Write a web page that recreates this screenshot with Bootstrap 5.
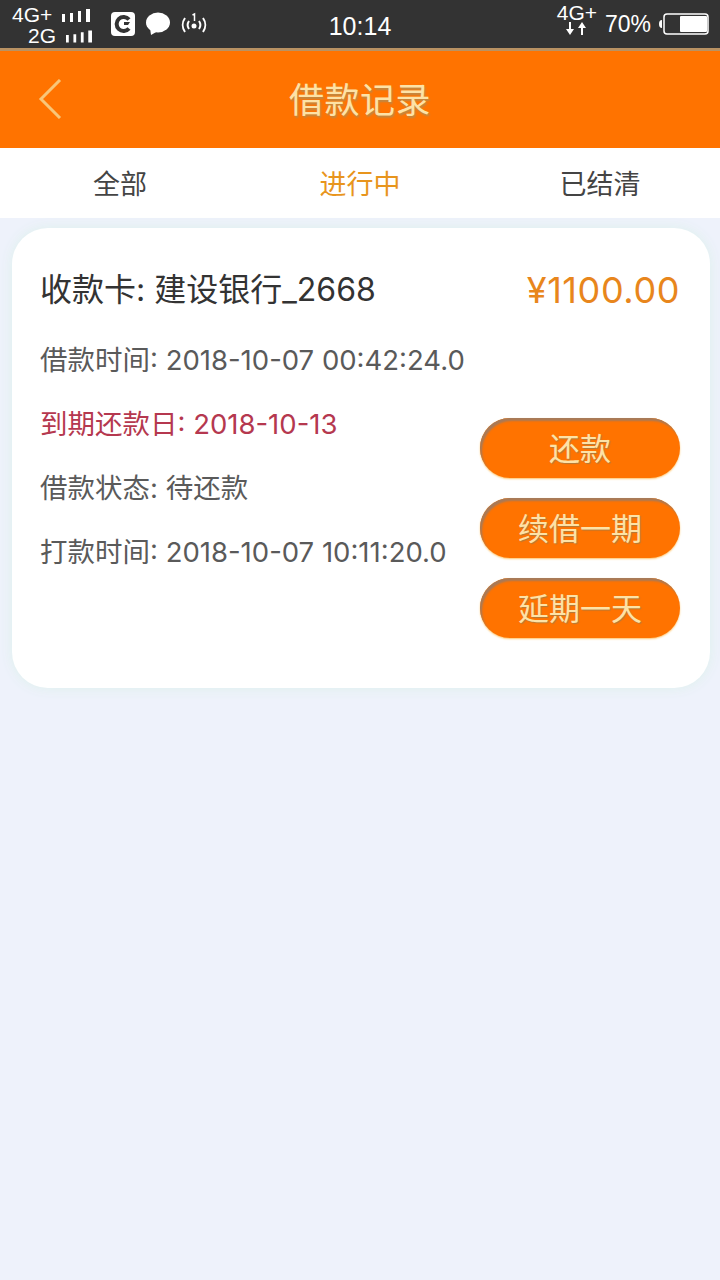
<!DOCTYPE html>
<html lang="zh">
<head>
<meta charset="utf-8">
<title>借款记录</title>
<link rel="stylesheet" href="https://cdn.jsdelivr.net/npm/bootstrap@5.3.0/dist/css/bootstrap.min.css">
<style>
html,body{height:100%}
body{background:#eef2fb;font-family:Inter,"Noto Sans CJK SC",sans-serif;font-weight:400;width:720px;min-height:1280px}
.sbar{height:48px;background:#333;color:#fff;font-family:"Liberation Sans",sans-serif;padding:0 11px 0 12px}
.net{width:80px;font-size:21px;line-height:20px;padding-top:3px}
.net div{height:21px}
.net .two{padding-left:16px}
.net svg{margin-left:2px}
.clock{font-size:25px;left:0;right:0;top:9px;line-height:34px}
.net4{width:44px;font-size:21px;line-height:20px;top:-5px}
.pct{font-size:23px;line-height:48px;margin-left:6px}
.topbar{height:100px;background:#ff7300;border-top:3px solid #b99263;color:#fde2a6;text-shadow:1px 2px 2px #b98a4a}
.topbar h1{font-size:35px;font-weight:400;margin:0;line-height:98px;letter-spacing:.5px}
.backb{left:38px;top:28px}
.tabstrip{height:70px;background:#fff;font-size:27px;line-height:74px;color:#444}
.tabstrip>div{width:240px}
.tabon{color:#e8951d}
.loan{margin:10px 10px 0 12px;height:460px;background:#fff;border-radius:36px;box-shadow:0 0 12px rgba(220,240,235,.95);padding:34px 30px 0 28px}
.ttl{font-size:32px;line-height:56px;color:#333;margin-bottom:10px}
.amt{font-size:36px;line-height:56px;color:#e8861c;font-weight:400;letter-spacing:.6px}
.ln{font-size:27.500px;line-height:64px;color:#5a5a5a;white-space:nowrap}
.due{color:#b5384f}
.acts{width:200px;padding-top:90px;gap:20px;margin-left:-40px}
.pillb{height:60px;width:200px;border-radius:30px;background:#ff7300;border:0;box-shadow:inset 2px 3px 2px #a87a58,0 1px 2px #ffc46a;color:#fde2a6;font-size:31px;font-weight:400;line-height:62px;padding:0;text-shadow:1px 1px 1px #b07a3a}
</style>
</head>
<body>
<div class="sbar d-flex align-items-center position-relative">
  <div class="net flex-shrink-0">
    <div class="d-flex align-items-center gap-2"><span>4G+</span><svg width="28" height="16" viewBox="0 0 28 16"><path fill="#fff" d="M0 7h3v8H0zM8 6h3v9H8zM16 4h3v11h-3zM24 2h4v13h-4z"/></svg></div>
    <div class="two d-flex align-items-center gap-2"><span>2G</span><svg width="28" height="16" viewBox="0 0 28 16"><path fill="#fff" d="M0 7h3v8H0zM8 6h3v9H8zM16 4h3v11h-3zM24 2h4v13h-4z"/></svg></div>
  </div>
  <svg class="flex-shrink-0" style="margin-left:19px" width="24" height="24" viewBox="0 0 24 24"><rect width="24" height="24" rx="4" fill="#fff"/><path fill="none" stroke="#333" stroke-width="4" d="M18 7.500A7 7 0 1 0 18 16.500"/><path fill="#333" d="M13 10h6l-2 3h-4z"/></svg>
  <svg class="flex-shrink-0" style="margin-left:10px" width="26" height="24" viewBox="0 0 26 24"><ellipse cx="13" cy="10.500" rx="12" ry="10" fill="#fff"/><path fill="#fff" d="M5 16l1 7 7-4z"/></svg>
  <svg class="flex-shrink-0" style="margin-left:9px" width="28" height="24" viewBox="0 0 28 24" fill="none" stroke="#fff" stroke-width="2"><path d="M5 6a12 12 0 0 0 0 14M23 6a12 12 0 0 1 0 14M9 9a7 7 0 0 0 0 8M19 9a7 7 0 0 1 0 8"/><circle cx="14" cy="14" r="2.500" fill="#fff" stroke="none"/><path d="M12.500 3l2-1v7" stroke-width="1.500"/></svg>
  <div class="clock position-absolute text-center">10:14</div>
  <div class="ms-auto d-flex align-items-center">
    <div class="net4 position-relative text-center">4G+<svg class="d-block" style="margin:-1px 0 0 11px" width="20" height="13" viewBox="0 0 20 13"><path fill="#fff" d="M3 0h2v7h3l-4 6-4-6h3zM15 13h2V6h3l-4-6-4 6h3z"/></svg></div>
    <div class="pct">70%</div>
    <svg class="ms-2" width="50" height="22" viewBox="0 0 50 22"><path fill="#fff" d="M0 11a3 4 0 0 1 3-4v8a3 4 0 0 1-3-4z"/><rect x="5" y="1" width="44" height="20" rx="3" fill="none" stroke="#fff" stroke-width="1.500"/><rect x="21" y="3" width="27" height="16" rx="1" fill="#fff"/></svg>
  </div>
</div>
<div class="topbar position-relative text-center">
  <svg class="backb position-absolute" width="24" height="40" viewBox="0 0 24 40" fill="none" stroke="#f8c678" stroke-width="3"><path d="M22 1L3 20l19 19"/></svg>
  <h1>借款记录</h1>
</div>
<div class="tabstrip d-flex text-center">
  <div>全部</div>
  <div class="tabon">进行中</div>
  <div>已结清</div>
</div>
<div class="loan">
  <div class="d-flex justify-content-between">
    <div class="ttl">收款卡: 建设银行_2668</div>
    <div class="amt">¥1100.00</div>
  </div>
  <div class="d-flex justify-content-between">
    <div>
      <div class="ln">借款时间: 2018-10-07 00:42:24.0</div>
      <div class="ln due">到期还款日: 2018-10-13</div>
      <div class="ln">借款状态: 待还款</div>
      <div class="ln">打款时间: 2018-10-07 10:11:20.0</div>
    </div>
    <div class="acts d-flex flex-column flex-shrink-0">
      <button type="button" class="btn pillb">还款</button>
      <button type="button" class="btn pillb">续借一期</button>
      <button type="button" class="btn pillb">延期一天</button>
    </div>
  </div>
</div>
<script src="https://cdn.jsdelivr.net/npm/bootstrap@5.3.0/dist/js/bootstrap.bundle.min.js"></script>
</body>
</html>
